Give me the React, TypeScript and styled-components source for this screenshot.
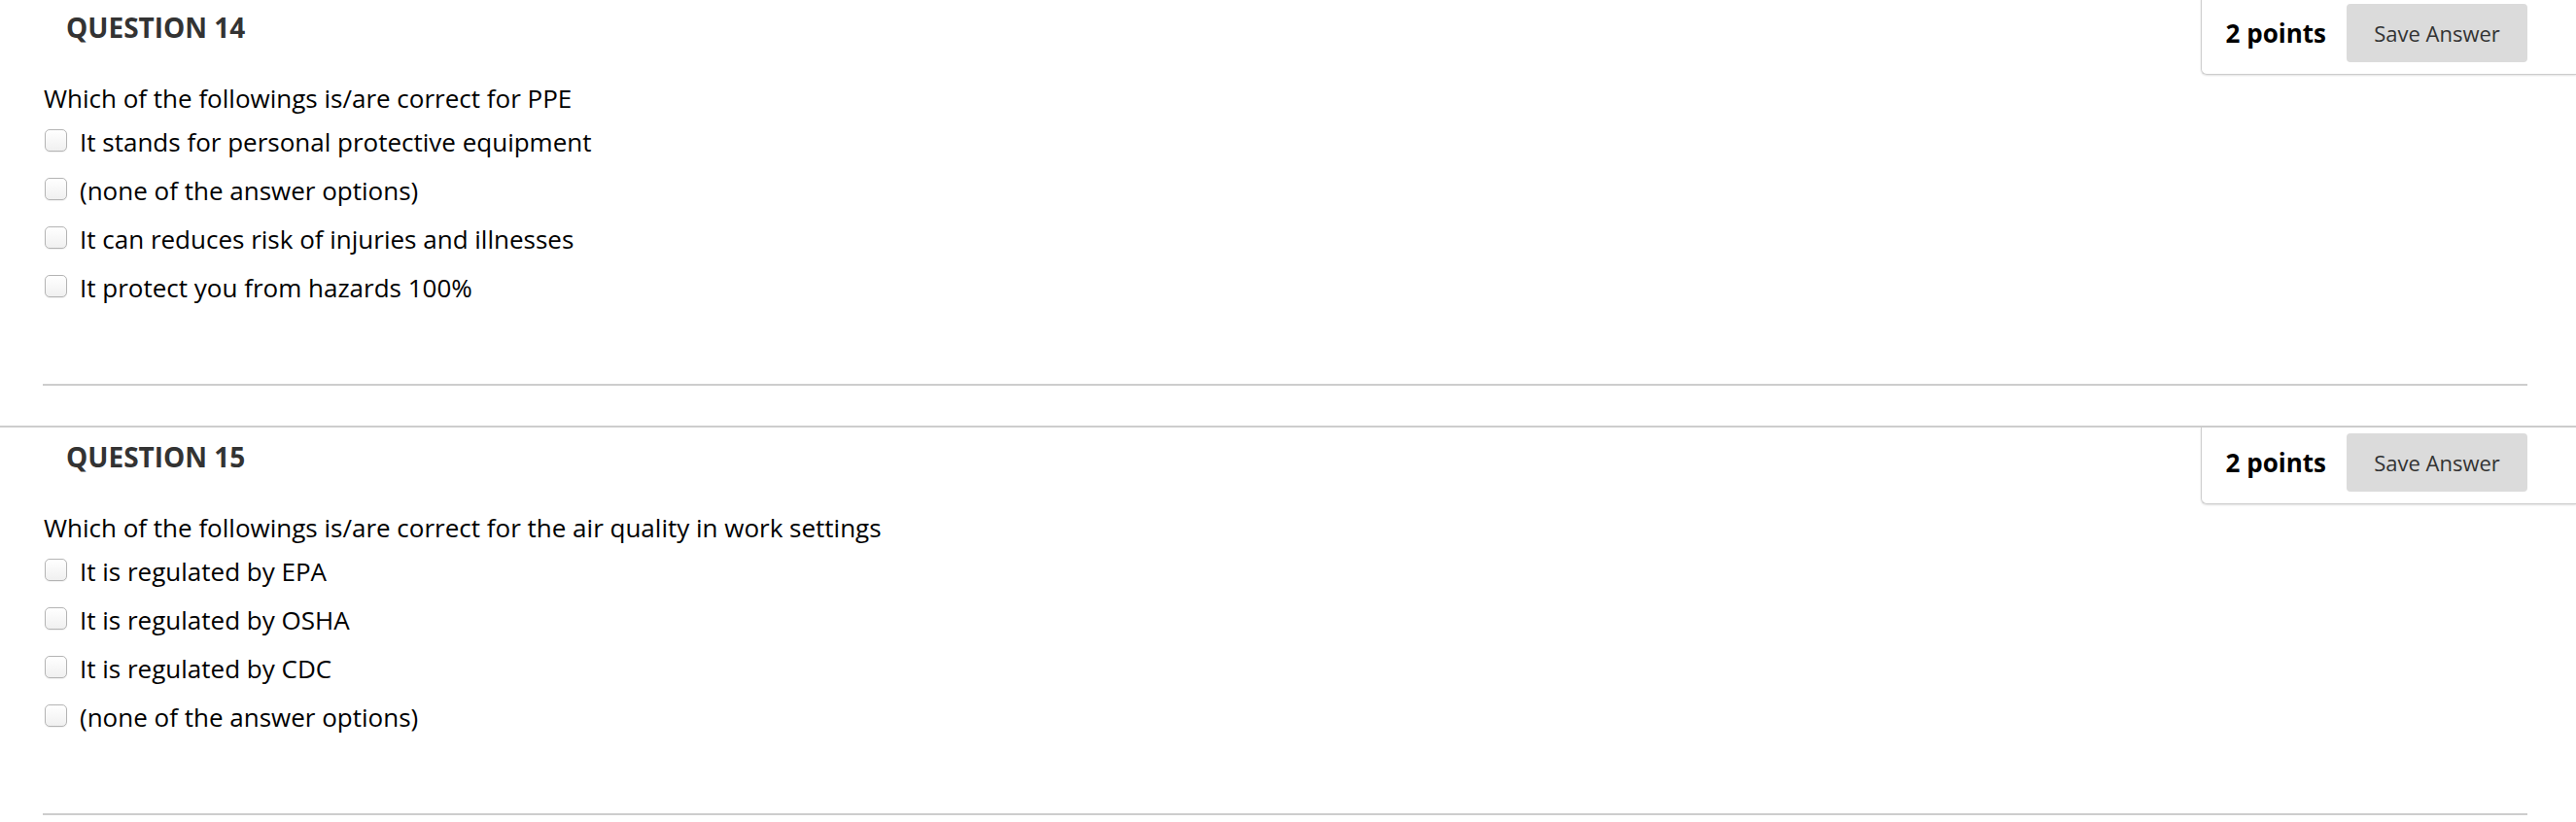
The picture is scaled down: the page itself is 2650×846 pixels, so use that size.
import styled, { createGlobalStyle } from 'styled-components'

// ── Data ───────────────────────────────────────────────────────────────────────

interface Question {
  number: number
  points: number
  prompt: string
  options: string[]
}

const questions: Question[] = [
  {
    number: 14,
    points: 2,
    prompt: 'Which of the followings is/are correct for PPE',
    options: [
      'It stands for personal protective equipment',
      '(none of the answer options)',
      'It can reduces risk of injuries and illnesses',
      'It protect you from hazards 100%',
    ],
  },
  {
    number: 15,
    points: 2,
    prompt: 'Which of the followings is/are correct for the air quality in work settings',
    options: [
      'It is regulated by EPA',
      'It is regulated by OSHA',
      'It is regulated by CDC',
      '(none of the answer options)',
    ],
  },
]

// ── Styled components ──────────────────────────────────────────────────────────

const GlobalStyle = createGlobalStyle`
  html, body { margin: 0; padding: 0; background: #fff; }
  body { font-family: "Open Sans", "Liberation Sans", sans-serif; color: #000; overflow: hidden; }
`

// page is scrolled a few pixels, so the first top border sits just above the fold
const List = styled.ol`
  list-style: none;
  margin: -4px 0 0;
  padding: 0;
`

const Item = styled.li`
  border-top: 2px solid #cdcdcd;
  padding-bottom: 41px;
`

const Header = styled.div`
  display: flex;
  justify-content: space-between;
  align-items: flex-start;
`

const Title = styled.h3`
  margin: 0;
  padding: 10px 0 0 68px;
  font-size: 28px;
  line-height: 40px;
  font-weight: 700;
  color: #333;
`

const PointsBox = styled.div`
  display: flex;
  align-items: center;
  gap: 21px;
  padding: 6px 50px 12px 25px;
  border: 1px solid #cdcdcd;
  border-top: none;
  border-right: none;
  border-bottom-left-radius: 6px;
  box-shadow: 0 1px 2px rgba(0, 0, 0, 0.12);
`

const Points = styled.span`
  font-size: 26px;
  font-weight: 700;
  color: #000;
`

const SaveButton = styled.button`
  width: 186px;
  height: 60px;
  border: none;
  border-radius: 4px;
  background: #dbdbdb;
  color: #333;
  font-family: inherit;
  font-size: 22px;
  cursor: pointer;
`

const Body = styled.div`
  margin: 0 50px 0 44px;
  padding: 7px 0 74px;
  border-bottom: 2px solid #cdcdcd;
`

const Prompt = styled.p`
  margin: 0 0 3px 1px;
  font-size: 26px;
  line-height: 34px;
`

const Options = styled.ul`
  list-style: none;
  margin: 0;
  padding: 0;
`

const Option = styled.li`
  display: flex;
  align-items: center;
  gap: 13px;
  height: 50px;
  padding-left: 2px;
  font-size: 26px;
`

const Box = styled.input`
  appearance: none;
  margin: 0 0 3px;
  width: 23px;
  height: 23px;
  border: 1px solid #b4b4b4;
  border-radius: 5px;
  background: linear-gradient(#fff, #f0f0f0);
  box-shadow: 0 1px 1px rgba(0, 0, 0, 0.06);
  flex-shrink: 0;
`

// ── Component ──────────────────────────────────────────────────────────────────

export default function App() {
  return (
    <>
      <GlobalStyle />
      <List>
        {questions.map(q => (
          <Item key={q.number}>
            <Header>
              <Title>QUESTION {q.number}</Title>
              <PointsBox>
                <Points>{q.points} points</Points>
                <SaveButton>Save Answer</SaveButton>
              </PointsBox>
            </Header>
            <Body>
              <Prompt>{q.prompt}</Prompt>
              <Options>
                {q.options.map(opt => (
                  <Option key={opt}>
                    <Box type="checkbox" />
                    <span>{opt}</span>
                  </Option>
                ))}
              </Options>
            </Body>
          </Item>
        ))}
      </List>
    </>
  )
}
